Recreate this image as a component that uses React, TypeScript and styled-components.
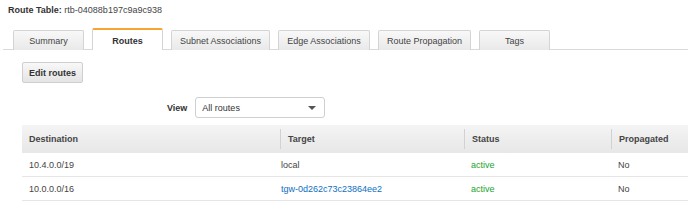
import styled, { createGlobalStyle, css } from "styled-components";

const GlobalStyle = createGlobalStyle`
  html, body {
    margin: 0;
    padding: 0;
    background: #fff;
  }
  body {
    font-family: "Liberation Sans", Arial, Helvetica, sans-serif;
    font-size: 9px;
    color: #444;
  }
`;

type Route = {
  destination: string;
  target: string;
  targetIsLink?: boolean;
  status: string;
  propagated: string;
};

const routes: Route[] = [
  { destination: "10.4.0.0/19", target: "local", status: "active", propagated: "No" },
  {
    destination: "10.0.0.0/16",
    target: "tgw-0d262c73c23864ee2",
    targetIsLink: true,
    status: "active",
    propagated: "No",
  },
];

const tabs = [
  { label: "Summary", width: 71 },
  { label: "Routes", width: 71 },
  { label: "Subnet Associations", width: 99 },
  { label: "Edge Associations", width: 92 },
  { label: "Route Propagation", width: 93 },
  { label: "Tags", width: 71 },
];

function App() {
  return (
    <>
      <GlobalStyle />
      <Page>
        <Title>
          <strong>Route Table:</strong> rtb-04088b197c9a9c938
        </Title>

        <TabBar>
          {tabs.map((t) => (
            <Tab key={t.label} $width={t.width} $active={t.label === "Routes"}>
              {t.label}
            </Tab>
          ))}
        </TabBar>

        <Content>
          <Toolbar>
            <Button type="button">Edit routes</Button>
          </Toolbar>

          <ViewRow>
            <ViewLabel>View</ViewLabel>
            <Select>
              <span>All routes</span>
              <Caret />
            </Select>
          </ViewRow>

          <Table>
            <HeaderRow>
              <HeadCell>Destination</HeadCell>
              <HeadCell $sep>Target</HeadCell>
              <HeadCell $sep>Status</HeadCell>
              <HeadCell $sep>Propagated</HeadCell>
            </HeaderRow>
            {routes.map((r) => (
              <Row key={r.destination}>
                <Cell>{r.destination}</Cell>
                <Cell>{r.targetIsLink ? <Link href="#">{r.target}</Link> : r.target}</Cell>
                <Cell $status>{r.status}</Cell>
                <Cell>{r.propagated}</Cell>
              </Row>
            ))}
          </Table>
        </Content>
      </Page>
    </>
  );
}

export default App;

const Page = styled.div`
  width: 688px;
  height: 210px;
  overflow: hidden;
`;

const Title = styled.div`
  padding: 4px 0 0 8px;
  line-height: 12px;
  color: #444;

  strong {
    color: #333;
  }
`;

const TabBar = styled.div`
  display: flex;
  align-items: flex-end;
  gap: 8px;
  margin: 12px 0 0 3px;
  padding-left: 10px;
  height: 21px;
  border-bottom: 1px solid #d9d9d9;
`;

const Tab = styled.div<{ $active?: boolean; $width: number }>`
  box-sizing: border-box;
  width: ${(p) => p.$width}px;
  height: 20px;
  display: flex;
  align-items: center;
  justify-content: center;
  margin-bottom: -1px;
  border: 1px solid #d4d4d4;
  border-bottom: none;
  border-radius: 2px 2px 0 0;
  background: linear-gradient(#f8f8f8, #e9e9e9);
  color: #444;
  white-space: nowrap;

  ${(p) =>
    p.$active &&
    css`
      height: 22px;
      background: #fff;
      border-top: 2px solid #f7a530;
      font-weight: bold;
      color: #333;
      padding-top: 1px;
    `}
`;

const Content = styled.div`
  padding-left: 22px;
`;

const Toolbar = styled.div`
  display: flex;
  margin-top: 12px;
`;

const Button = styled.button`
  box-sizing: border-box;
  height: 21px;
  width: 61px;
  padding: 0;
  border: 1px solid #cfcfcf;
  border-radius: 2px;
  background: linear-gradient(#f8f8f8, #e4e4e4);
  font-family: inherit;
  font-size: 9px;
  font-weight: bold;
  color: #333;
`;

const ViewRow = styled.div`
  display: flex;
  align-items: center;
  gap: 8px;
  margin-top: 14px;
  padding-left: 145px;
`;

const ViewLabel = styled.span`
  font-weight: bold;
  color: #333;
`;

const Select = styled.div`
  box-sizing: border-box;
  width: 130px;
  height: 21px;
  display: flex;
  align-items: center;
  justify-content: space-between;
  padding: 0 8px 0 6px;
  border: 1px solid #cfcfcf;
  border-radius: 3px;
  background: #fff;
  color: #333;
`;

const Caret = styled.span`
  width: 0;
  height: 0;
  border-left: 4px solid transparent;
  border-right: 4px solid transparent;
  border-top: 4px solid #555;
`;

const Table = styled.div`
  margin-top: 7px;
`;

const HeaderRow = styled.div`
  display: grid;
  grid-template-columns: 258px 184px 147px 1fr;
  height: 28px;
  align-items: center;
  background: linear-gradient(#f4f4f4, #e7e7e7);
`;

const HeadCell = styled.div<{ $sep?: boolean }>`
  position: relative;
  padding-left: 7px;
  font-weight: bold;
  color: #444;
  white-space: nowrap;

  ${(p) =>
    p.$sep &&
    css`
      padding-left: 8px;
      &::before {
        content: "";
        position: absolute;
        left: 0;
        top: -5px;
        bottom: -5px;
        border-left: 1px solid #d2d2d2;
      }
    `}
`;

const Row = styled.div`
  display: grid;
  grid-template-columns: 252px 190px 147px 1fr;
  height: 24px;
  box-sizing: border-box;
  align-items: center;
  border-bottom: 1px solid #e6e6e6;
`;

const Cell = styled.div<{ $status?: boolean }>`
  padding-left: 7px;
  white-space: nowrap;
  color: ${(p) => (p.$status ? "#22a32a" : "#444")};
`;

const Link = styled.a`
  color: #0d6ec2;
  text-decoration: none;
`;
